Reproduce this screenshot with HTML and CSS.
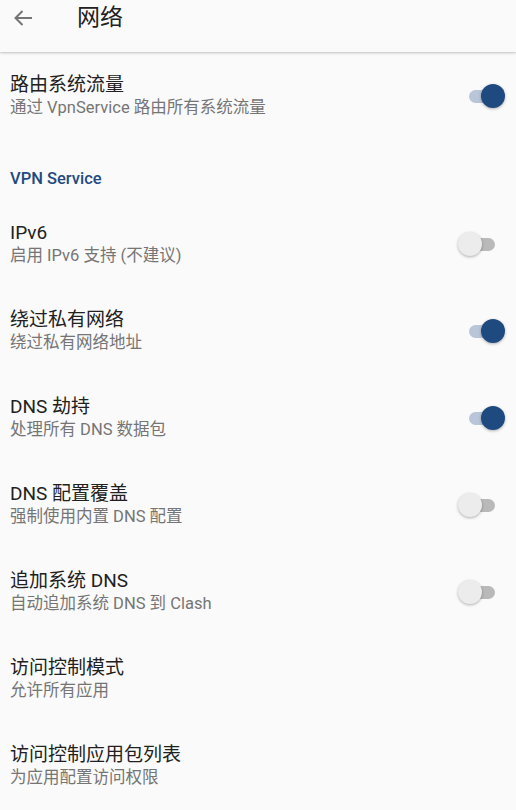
FILE: index.html
```html
<!DOCTYPE html>
<html lang="zh">
<head>
<meta charset="utf-8">
<link rel="stylesheet" href="styles.css">
</head>
<body>
<header class="appbar">
  <svg class="back" viewBox="0 0 24 24" width="24" height="24"><path d="M21 12H4.5M11.5 5L4.5 12l7 7" fill="none" stroke="currentColor" stroke-width="2"/></svg>
  <h1 class="title">网络</h1>
</header>
<main class="list">
  <div class="row">
    <div class="text"><div class="t">路由系统流量</div><div class="s">通过 VpnService 路由所有系统流量</div></div>
    <span class="switch on"><span class="track"></span><span class="thumb"></span></span>
  </div>
  <div class="section">VPN Service</div>
  <div class="row">
    <div class="text"><div class="t">IPv6</div><div class="s">启用 IPv6 支持 (不建议)</div></div>
    <span class="switch"><span class="track"></span><span class="thumb"></span></span>
  </div>
  <div class="row">
    <div class="text"><div class="t">绕过私有网络</div><div class="s">绕过私有网络地址</div></div>
    <span class="switch on"><span class="track"></span><span class="thumb"></span></span>
  </div>
  <div class="row">
    <div class="text"><div class="t">DNS 劫持</div><div class="s">处理所有 DNS 数据包</div></div>
    <span class="switch on"><span class="track"></span><span class="thumb"></span></span>
  </div>
  <div class="row">
    <div class="text"><div class="t">DNS 配置覆盖</div><div class="s">强制使用内置 DNS 配置</div></div>
    <span class="switch"><span class="track"></span><span class="thumb"></span></span>
  </div>
  <div class="row">
    <div class="text"><div class="t">追加系统 DNS</div><div class="s">自动追加系统 DNS 到 Clash</div></div>
    <span class="switch"><span class="track"></span><span class="thumb"></span></span>
  </div>
  <div class="row">
    <div class="text"><div class="t">访问控制模式</div><div class="s">允许所有应用</div></div>
  </div>
  <div class="row">
    <div class="text"><div class="t">访问控制应用包列表</div><div class="s">为应用配置访问权限</div></div>
  </div>
</main>
</body>
</html>
```
FILE: styles.css
```css
* { box-sizing: border-box; }
html, body { margin: 0; padding: 0; }
body {
  background: #fafafa;
  font-family: Roboto, "Noto Sans CJK SC", sans-serif;
  width: 516px;
  height: 810px;
  overflow: hidden;
}
.appbar {
  height: 52px;
  display: flex;
  align-items: flex-start;
  padding: 6px 0 0 11px;
  background: #fafafa;
  box-shadow: 0 1px 3px rgba(0,0,0,0.18), 0 1px 1px rgba(0,0,0,0.06);
  position: relative;
  z-index: 1;
}
.back { color: #757575; }
.title {
  margin: -2px 0 0 42px;
  font-size: 23px;
  font-weight: 400;
  line-height: 28px;
  color: #212121;
}
.list { display: flex; flex-direction: column; }
.row {
  height: 87px;
  display: flex;
  align-items: center;
  padding: 0 10px;
}
.text { flex: 1; }
.t { font-size: 19px; line-height: 23px; color: #212121; }
.s { font-size: 16.5px; line-height: 23px; color: #757575; }
.section {
  height: 61px;
  padding: 31px 10px 0;
  font-size: 16.5px;
  font-weight: 500;
  line-height: 18px;
  color: #234a80;
}
.switch {
  position: relative;
  width: 38px;
  height: 26px;
  margin-right: 6px;
  flex: none;
}
.track {
  position: absolute;
  left: 7px;
  top: 7px;
  width: 26px;
  height: 13px;
  border-radius: 7px;
  background: #b9b9b9;
}
.thumb {
  position: absolute;
  left: -4px;
  top: 1px;
  width: 24px;
  height: 24px;
  border-radius: 50%;
  background: #ececec;
  box-shadow: 0 1px 3px rgba(0,0,0,0.3);
}
.switch.on .track { background: #b9c6d9; }
.switch.on .thumb { left: 19px; background: #1f4a80; }
```
